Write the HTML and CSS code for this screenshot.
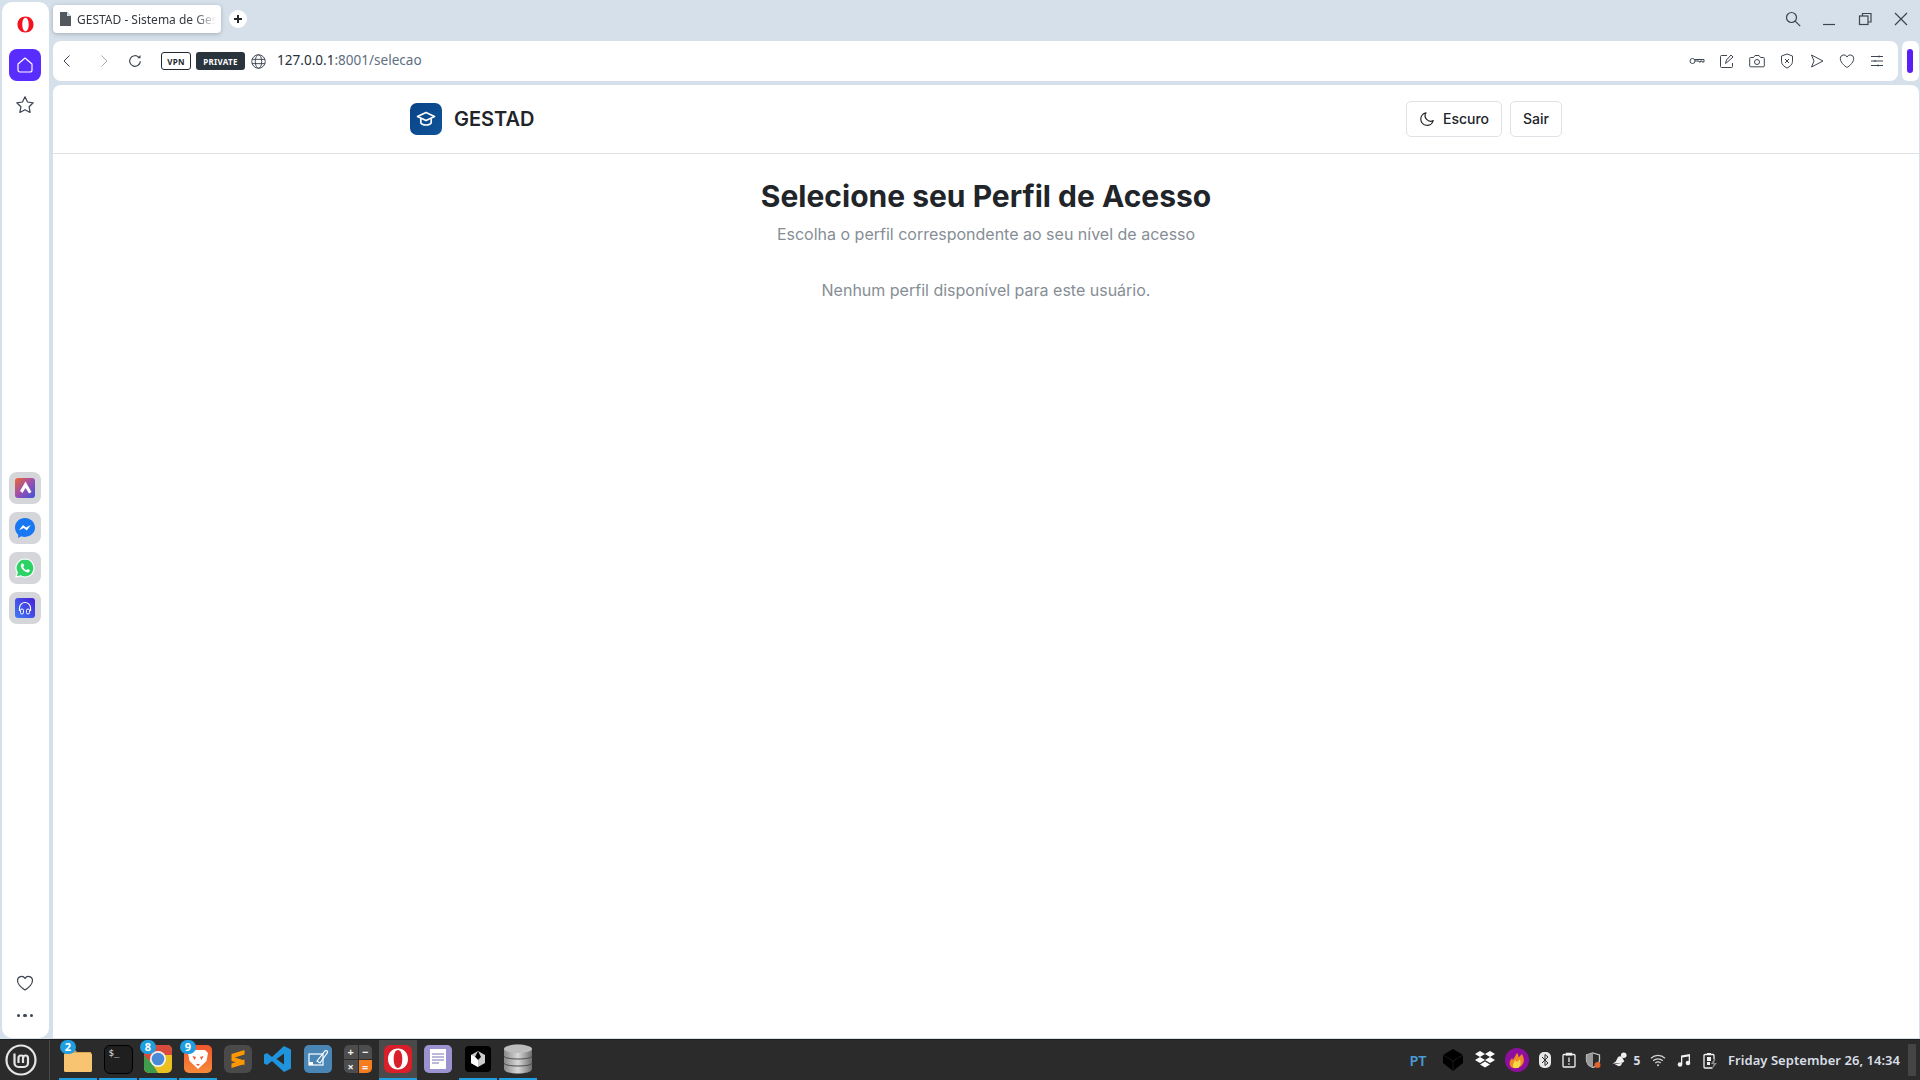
FILE: index.html
```html
<!DOCTYPE html>
<html lang="pt-BR">

<head>
    <meta charset="UTF-8">
    <meta name="viewport" content="width=device-width, initial-scale=1.0">
    <title>GESTAD - Sistema de Gestão</title>
    <link rel="stylesheet" href="styles.css">
</head>

<body>
    <div class="browser">
        <aside class="sidebar">
            <svg class="opera-mark" width="17" height="17" viewBox="0 0 17 17"><path fill-rule="evenodd" d="M8.500.5c4.700 0 8 3.500 8 8s-3.300 8-8 8-8-3.500-8-8 3.300-8 8-8zm0 1.200c-2 0-3.200 3-3.200 6.800s1.200 6.800 3.200 6.800 3.200-3 3.200-6.800-1.200-6.800-3.200-6.800z" fill="#f5121f"/></svg>
            <div class="side-btn side-btn-active">
                <svg width="18" height="18" viewBox="0 0 18 18" fill="none" stroke="#fff" stroke-width="1.200" stroke-linejoin="round"><path d="M2 8 9 2l7 6v6a2 2 0 0 1-2 2H4a2 2 0 0 1-2-2z"/></svg>
            </div>
            <div class="side-btn">
                <svg width="20" height="20" viewBox="0 0 18 18" fill="none" stroke="#3d4650" stroke-width="1.100" stroke-linejoin="round"><path d="M9 1.600l2.300 4.700 5.100.7-3.700 3.600.9 5.100L9 13.200l-4.600 2.500.9-5.100L1.600 7l5.100-.7z"/></svg>
            </div>
            <div class="side-apps">
                <div class="side-btn side-btn-app">
                    <svg width="20" height="20" viewBox="0 0 20 20"><defs><linearGradient id="aria" x1="0" y1="0" x2="1" y2="1"><stop offset="0" stop-color="#f0662c"/><stop offset=".5" stop-color="#9a4fb0"/><stop offset="1" stop-color="#3a55d8"/></linearGradient></defs><rect width="20" height="20" rx="3" fill="url(#aria)"/><path d="M10.500 3.500 5 13l2.500 2 3-5 3.500 5.500 2.500-1.500z" fill="#fff"/></svg>
                </div>
                <div class="side-btn side-btn-app">
                    <svg width="20" height="20" viewBox="0 0 20 20"><path d="M10 0C4.400 0 0 4.100 0 9.600c0 2.900 1.200 5.400 3.200 7.100V20l3-1.700c1.200.4 2.500.6 3.800.6 5.600 0 10-4.100 10-9.300S15.600 0 10 0z" fill="#1877f2"/><path d="M4 12.300 8 7l3 2.500L15.800 7l-4 5.400-3-2.500z" fill="#fff"/></svg>
                </div>
                <div class="side-btn side-btn-app">
                    <svg width="20" height="20" viewBox="0 0 20 20"><path d="M10 1a9 9 0 0 0-7.700 13.600L1 19l4.500-1.200A9 9 0 1 0 10 1z" fill="#2bd366" stroke="#fff" stroke-width="1.200"/><path d="M7 5.500c-.6.300-1.300 1.200-1.200 2.300.2 2.700 3.700 6.300 6.600 6.600 1.100.1 2-.6 2.300-1.300.2-.5.100-.9-.1-1l-2-1-.9 1.100c-1.500-.5-2.900-1.900-3.500-3.500l1-.9-.9-2.100c-.1-.2-.8-.4-1.300-.2z" fill="#fff"/></svg>
                </div>
                <div class="side-btn side-btn-app">
                    <svg width="20" height="20" viewBox="0 0 20 20"><defs><linearGradient id="player" x1="0" y1="1" x2="1" y2="0"><stop offset="0" stop-color="#3d7cf5"/><stop offset="1" stop-color="#4a1fd8"/></linearGradient></defs><rect width="20" height="20" rx="3" fill="url(#player)"/><path d="M4.500 13v-3a5.500 5.500 0 0 1 11 0v3" fill="none" stroke="#fff" stroke-width="1.200"/><rect x="5.500" y="11" width="3" height="5" rx="1.500" fill="none" stroke="#fff"/><rect x="11.500" y="11" width="3" height="5" rx="1.500" fill="none" stroke="#fff"/></svg>
                </div>
            </div>
            <div class="side-bottom">
                <svg width="18" height="18" viewBox="0 0 18 18" fill="none" stroke="#3d4650" stroke-width="1.200" stroke-linejoin="round"><path d="M9 16S1.500 11.500 1.500 6.300A4 4 0 0 1 9 4.500a4 4 0 0 1 7.500 1.800C16.500 11.500 9 16 9 16z"/></svg>
                <div class="side-dots"><i></i><i></i><i></i></div>
            </div>
        </aside>

        <div class="main">
            <div class="tabstrip">
                <div class="tab">
                    <svg width="13" height="14" viewBox="0 0 13 14"><path d="M1 0h7l4 4v10H1z" fill="#53585e"/><path d="M8 0v4h4" fill="#d6e0ea"/></svg>
                    <span class="tab-title">GESTAD - Sistema de Gestão</span>
                </div>
                <div class="tab-new">
                    <svg width="10" height="10" viewBox="0 0 10 10"><path d="M5 1v8M1 5h8" stroke="#23292f" stroke-width="2"/></svg>
                </div>
                <div class="window-controls">
                    <svg width="18" height="18" viewBox="0 0 18 18" fill="none" stroke="#3c444c" stroke-width="1.200"><circle cx="7.500" cy="7.500" r="5"/><path d="M11.200 11.200l5 5"/></svg>
                    <svg width="18" height="18" viewBox="0 0 18 18" fill="none" stroke="#3c444c" stroke-width="1.200"><path d="M3 14.500h12"/></svg>
                    <svg width="18" height="18" viewBox="0 0 18 18" fill="none" stroke="#3c444c" stroke-width="1.200"><rect x="3.500" y="6" width="8.500" height="8.500"/><path d="M6.500 6V3.500H15V12h-3"/></svg>
                    <svg width="18" height="18" viewBox="0 0 18 18" fill="none" stroke="#3c444c" stroke-width="1.200"><path d="M3 3l12 12M15 3 3 15"/></svg>
                </div>
            </div>

            <div class="address-row">
                <div class="address-bar">
                    <svg class="nav-back" width="12" height="14" viewBox="0 0 12 14" fill="none" stroke="#3d4650" stroke-width="1"><path d="M8.500 1.500 3 7l5.500 5.500"/></svg>
                    <svg class="nav-forward" width="12" height="14" viewBox="0 0 12 14" fill="none" stroke="#a5abb2" stroke-width="1"><path d="M3.500 1.500 9 7l-5.500 5.500"/></svg>
                    <svg class="nav-reload" width="14" height="14" viewBox="0 0 14 14" fill="none" stroke="#3d4650" stroke-width="1.200"><path d="M12.300 7.200a5.300 5.300 0 1 1-1.500-3.900"/><path d="M12.500 1v3.200H9.300" fill="#3d4650" stroke="none"/></svg>
                    <span class="badge-vpn">VPN</span>
                    <span class="badge-private">PRIVATE</span>
                    <svg class="globe" width="15" height="15" viewBox="0 0 14 14" fill="none" stroke="#3d4650" stroke-width=".9"><circle cx="7" cy="7" r="6.300"/><ellipse cx="7" cy="7" rx="3" ry="6.300"/><path d="M.9 5h12.200M.9 9h12.200"/></svg>
                    <span class="url"><span class="url-host">127.0.0.1</span>:8001/selecao</span>
                    <div class="address-tools">
                        <svg width="16" height="16" viewBox="0 0 16 16" fill="none" stroke="#3d4650" stroke-width="1"><circle cx="3.500" cy="8" r="2.500"/><path d="M6 6.500h9v2.500h-2v-1h-1.500v1H10v-1H6"/></svg>
                        <svg width="16" height="16" viewBox="0 0 16 16" fill="none" stroke="#3d4650" stroke-width="1"><path d="M8 2.500H2.500a1 1 0 0 0-1 1v10a1 1 0 0 0 1 1h10a1 1 0 0 0 1-1V10"/><path d="M6.500 10.500l1-3.500 4.500-5 2 2-5 4.500z"/></svg>
                        <svg width="16" height="16" viewBox="0 0 16 16" fill="none" stroke="#3d4650" stroke-width="1"><path d="M1.500 4.500h3L6 2.500h4l1.500 2h3a.8.8 0 0 1 .8.800V13a.8.8 0 0 1-.8.800h-13A.8.800 0 0 1 .7 13V5.300a.8.800 0 0 1 .8-.800z"/><circle cx="8" cy="9" r="2.500"/></svg>
                        <svg width="16" height="16" viewBox="0 0 16 16" fill="none" stroke="#3d4650" stroke-width="1"><path d="M8 1l5.500 2v5.500c0 3-3 5.500-5.500 6.500-2.500-1-5.500-3.500-5.500-6.500V3z"/><path d="M6 6l4 4M10 6l-4 4"/></svg>
                        <svg width="16" height="16" viewBox="0 0 16 16" fill="none" stroke="#3d4650" stroke-width="1" stroke-linejoin="round"><path d="M2.500 2l11.500 6-11.500 6L5 8z"/></svg>
                        <svg width="16" height="16" viewBox="0 0 16 16" fill="none" stroke="#3d4650" stroke-width="1" stroke-linejoin="round"><path d="M8 14.500S1.300 10.500 1.300 5.500A3.500 3.500 0 0 1 8 4a3.500 3.500 0 0 1 6.700 1.500C14.700 10.500 8 14.500 8 14.500z"/></svg>
                        <svg width="16" height="16" viewBox="0 0 16 16" fill="none" stroke="#3d4650" stroke-width="1"><path d="M2 3.500h12M2 8h12M2 12.500h12M10 2.500v2M6 7v2M9 11.500v2"/></svg>
                    </div>
                </div>
                <div class="side-panel-toggle"><span></span></div>
            </div>

            <div class="page">
                <header class="topbar">
                    <div class="topbar-inner">
                        <div class="brand">
                            <div class="brand-logo">
                                <svg width="20" height="20" viewBox="0 0 20 20" fill="none" stroke="#fff" stroke-width="1.700" stroke-linejoin="round"><path d="M10 3.500 1.500 7.500 10 11.500l8.500-4z"/><path d="M4.800 9.500v4c0 1.300 2.400 2.500 5.200 2.500s5.200-1.200 5.200-2.500v-4"/></svg>
                            </div>
                            <span class="brand-name">GESTAD</span>
                        </div>
                        <div class="topbar-actions">
                            <button class="btn" type="button">
                                <svg width="16" height="16" viewBox="0 0 16 16" fill="none" stroke="#212529" stroke-width="1.200" stroke-linejoin="round"><path d="M7 1.800a6.300 6.300 0 1 0 7.200 7.800A5.500 5.500 0 0 1 7 1.800z"/></svg>
                                Escuro
                            </button>
                            <button class="btn" type="button">Sair</button>
                        </div>
                    </div>
                </header>
                <main class="content">
                    <h1>Selecione seu Perfil de Acesso</h1>
                    <p class="subtitle">Escolha o perfil correspondente ao seu nível de acesso</p>
                    <p class="empty">Nenhum perfil disponível para este usuário.</p>
                </main>
            </div>
        </div>
    </div>

    <footer class="taskbar">
        <div class="mint-logo">
            <svg width="32" height="32" viewBox="0 0 32 32" fill="none" stroke="#e6e6e6"><circle cx="16" cy="16" r="14.500" stroke-width="2.200"/><path d="M9.500 9.500V19a4 4 0 0 0 4 4h5.500a4 4 0 0 0 4-4v-5a2.500 2.500 0 0 0-5 0v5M13.500 19v-5a2.500 2.500 0 0 1 5 0" stroke-width="2.200"/></svg>
        </div>
        <div class="launcher">
            <div class="slot slot-open">
                <span class="count">2</span>
                <svg width="28" height="26" viewBox="0 0 28 26"><path d="M1 4h10l2 2h14v3H1z" fill="#d9a654"/><rect x="0" y="7" width="28" height="19" rx="1.500" fill="#f8c471"/></svg>
            </div>
            <div class="slot slot-open">
                <div class="term-icon">$_</div>
            </div>
            <div class="slot slot-open">
                <span class="count">8</span>
                <svg width="28" height="28" viewBox="0 0 28 28"><rect width="28" height="28" rx="5" fill="#eac120"/><path d="M0 5a5 5 0 0 1 5-5h18a5 5 0 0 1 5 5v5H14L5 16 0 11z" fill="#d94c3d"/><path d="M0 10l9 10 5 8H5a5 5 0 0 1-5-5z" fill="#3f9e4d"/><circle cx="14" cy="14" r="8" fill="#f2f2f2"/><circle cx="14" cy="14" r="6.300" fill="#4a8ad6"/></svg>
            </div>
            <div class="slot slot-open">
                <span class="count">9</span>
                <svg width="28" height="28" viewBox="0 0 28 28"><defs><linearGradient id="brave" x1="0" y1="0" x2="0" y2="1"><stop offset="0" stop-color="#f2552c"/><stop offset="1" stop-color="#f68a3a"/></linearGradient></defs><rect width="28" height="28" rx="5" fill="url(#brave)"/><path d="M7 5h14l3 3-1.500 8L14 24l-8.500-8L4 8z" fill="#fff"/><path d="M8.500 11l3.500 1-1.500 3zM19.500 11l-3.500 1 1.500 3zM12 19h4l-2 2z" fill="#f2552c"/></svg>
            </div>
            <div class="slot">
                <svg width="28" height="28" viewBox="0 0 28 28"><rect width="28" height="28" rx="6" fill="#4a4a4a"/><path d="M20.500 5v4.500L7.500 13.500V9zM7.500 11.500l13 4v4.500l-13-4zM20.500 14.500v4.500l-13 4v-4.500z" fill="#ff9800"/></svg>
            </div>
            <div class="slot">
                <svg width="28" height="28" viewBox="0 0 28 28"><path d="M20 1l7 3.500v19L20 27 8 16l-5 4-3-1.500V9.500L3 8l5 4zM20 8.500 12.500 14l7.500 5.500z" fill="#1f94dc"/></svg>
            </div>
            <div class="slot">
                <svg width="28" height="28" viewBox="0 0 28 28"><rect width="28" height="28" rx="5" fill="#4a86b5"/><rect x="5" y="9" width="14" height="11" fill="none" stroke="#fff" stroke-width="1.200"/><rect x="5" y="17" width="4" height="3" fill="#fff"/><path d="M13 16l8-10c1-1 3 0 2.500 1.500L16 18z" fill="none" stroke="#fff" stroke-width="1.200"/></svg>
            </div>
            <div class="slot">
                <div class="calc-icon"><span>+</span><span>−</span><span>×</span><span class="calc-eq">=</span></div>
            </div>
            <div class="slot slot-open slot-active">
                <svg width="28" height="28" viewBox="0 0 28 28"><rect width="28" height="28" rx="6" fill="#d81f2a"/><path fill-rule="evenodd" d="M14 3.500c6 0 10 4.500 10 10.500s-4 10.500-10 10.500S4 20 4 14 8 3.500 14 3.500zm0 1.500c-2.800 0-4.300 4-4.300 9s1.500 9 4.300 9 4.300-4 4.300-9-1.500-9-4.300-9z" fill="#fff"/></svg>
            </div>
            <div class="slot">
                <svg width="28" height="28" viewBox="0 0 28 28"><rect width="28" height="28" rx="5" fill="#9b93d0"/><rect x="6" y="4" width="16" height="20" fill="#fff"/><path d="M8 9h12M8 12h12M8 15h12M8 18h7" stroke="#7a72b5"/></svg>
            </div>
            <div class="slot slot-open">
                <svg width="26" height="26" viewBox="0 0 26 26"><rect width="26" height="26" rx="4" fill="#000"/><path d="M13 5l7 4v8l-7 4-7-4V9z" fill="#c9c9c9"/><path d="M13 5l3 6-3 3-3-3z" fill="#000"/><path d="M13 14v7l-7-4V9l4 2z" fill="#fff"/></svg>
            </div>
            <div class="slot slot-open">
                <svg width="30" height="30" viewBox="0 0 30 30"><defs><linearGradient id="db" x1="0" y1="0" x2="1" y2="0"><stop offset="0" stop-color="#8a8a8a"/><stop offset=".5" stop-color="#d8d8d8"/><stop offset="1" stop-color="#6e6e6e"/></linearGradient></defs><path d="M1 5c0-6 28-6 28 0v20c0 6-28 6-28 0z" fill="url(#db)"/><path d="M1 12c0 4 28 4 28 0M1 19c0 4 28 4 28 0" fill="none" stroke="#4a4a4a"/><ellipse cx="15" cy="5" rx="14" ry="4" fill="#bdbdbd"/></svg>
            </div>
        </div>
        <div class="tray">
            <span class="tray-lang">PT</span>
            <svg width="24" height="24" viewBox="0 0 24 24"><path d="M12 1l10 6v8l-10 8L2 15V7z" fill="#000"/><path d="M12 13l10-6M12 13 2 7M12 13v10" stroke="#1a1a1a"/></svg>
            <svg width="22" height="20" viewBox="0 0 22 20" fill="#fff"><path d="M6 1l5 3-5 3-5-3zM16 1l5 3-5 3-5-3zM6 7l5 3-5 3-5-3zM16 7l5 3-5 3-5-3zM6 14.500l5-3 5 3-5 3z"/></svg>
            <svg width="24" height="24" viewBox="0 0 24 24"><circle cx="12" cy="12" r="12" fill="#8e0f9e"/><path d="M8 20c-3-1-4-4-3-7l2-3 1 2 4-7c2 2 1 4 2 4l3-3c2 4 3 8 0 11-1 2-6 4-9 3z" fill="#f08a24"/><path d="M9 20c-2-2-1-4 1-8l2 2 3-3c1 4 1 7-2 9z" fill="#f6d84b"/></svg>
            <svg width="12" height="16" viewBox="0 0 12 16"><rect width="12" height="16" rx="5" fill="#e8e8e8"/><path d="M3 5l6 6-3 2.500V2.500L9 5l-6 6" fill="none" stroke="#2b2b2b"/></svg>
            <svg width="14" height="16" viewBox="0 0 14 16" fill="none" stroke="#f0f0f0" stroke-width="1.300"><rect x="1" y="2.500" width="12" height="12.500" rx="1"/><path d="M4.500 3.500v-2h5v2" fill="#f0f0f0"/><path d="M7 5.500V10M7 11.300v1.500"/></svg>
            <svg width="16" height="16" viewBox="0 0 16 16"><path d="M8 1l6.500 2v5c0 3.500-3 6-6.500 7.500C4.500 14 1.500 11.500 1.500 8V3z" fill="none" stroke="#c8c8c8" stroke-width="1.300"/><path d="M8 1v14.500C4.500 14 1.500 11.500 1.500 8V3z" fill="#9a9a9a"/><circle cx="12.500" cy="13" r="3" fill="#e0642c"/></svg>
            <svg width="17" height="16" viewBox="0 0 15 15" fill="#f0f0f0"><path d="M1 11l3-2 2-4c1-1.500 3-1.500 4 0l2 4-2 1z"/><path d="M3 11.500l7-1.500-1 2.500c-1 1-3 1-4 0z"/><circle cx="11.500" cy="3" r="2.600"/></svg>
            <span class="tray-num">5</span>
            <svg width="16" height="13" viewBox="0 0 16 13" fill="none" stroke="#d4d4d4" stroke-width="1.200"><path d="M1 4.200a10 10 0 0 1 14 0M3.200 6.700a7 7 0 0 1 9.600 0M5.300 9a4 4 0 0 1 5.400 0"/><circle cx="8" cy="11.300" r="1" fill="#d4d4d4" stroke="none"/></svg>
            <svg width="14" height="14" viewBox="0 0 14 14" fill="#f0f0f0"><path d="M4 2.500 13 1v2.200L5.300 4.500V11H4zM11.700 3.200H13V10h-1.300z"/><circle cx="3" cy="11.500" r="2.300"/><circle cx="11" cy="10" r="2.300"/></svg>
            <svg width="14" height="17" viewBox="0 0 14 17"><path d="M9.500 16H2a1 1 0 0 1-1-1V3.500a1 1 0 0 1 1-1h8a1 1 0 0 1 1 1V7" fill="none" stroke="#f0f0f0" stroke-width="1.300"/><rect x="4" y="1" width="4" height="2" fill="#f0f0f0"/><path d="M4 5h4v4H4zM4 10h3v3H4z" fill="#f0f0f0"/><path d="M11 7 8 12h2.500L9 17l5-6h-3l1.500-4z" fill="#8a8a8a"/></svg>
            <span class="tray-clock">Friday September 26, 14:34</span>
            <span></span>
            <span class="show-desktop"></span>
        </div>
    </footer>
</body>

</html>
```

FILE: styles.css
```css
* {
    box-sizing: border-box;
}

html,
body {
    height: 100%;
}

body {
    margin: 0;
    height: 1080px;
    overflow: hidden;
    display: flex;
    flex-direction: column;
    background-color: #d6e0ea;
    font-family: "Noto Sans", sans-serif;
}

.browser {
    flex: 1;
    min-height: 0;
    display: flex;
    padding: 2px 1px 1px 2px;
}

/* left rail */
.sidebar {
    width: 47px;
    margin-right: 4px;
    background-color: #fff;
    border-radius: 10px;
    display: flex;
    flex-direction: column;
    align-items: center;
    padding: 14px 1px 0 0;
}

.opera-mark {
    margin-bottom: 16px;
}

.side-btn {
    width: 32px;
    height: 32px;
    border-radius: 8px;
    display: flex;
    align-items: center;
    justify-content: center;
}

.side-btn-active {
    background-color: #5a2dff;
    margin-bottom: 8px;
}

.side-apps {
    margin-top: 351px;
    display: flex;
    flex-direction: column;
    gap: 8px;
}

.side-btn-app {
    background-color: #d4d6da;
}

.side-bottom {
    margin-top: auto;
    padding-bottom: 21px;
    display: flex;
    flex-direction: column;
    align-items: center;
    gap: 22px;
}

.side-dots {
    display: flex;
    gap: 3px;
}

.side-dots i {
    width: 3.500px;
    height: 3.500px;
    border-radius: 50%;
    background-color: #3d4650;
}

.main {
    flex: 1;
    min-width: 0;
    display: flex;
    flex-direction: column;
}

/* tabs and window buttons */
.tabstrip {
    height: 39px;
    display: flex;
    align-items: flex-start;
    padding-top: 3px;
}

.tab {
    width: 168px;
    height: 28px;
    background-color: #fff;
    border-radius: 4px;
    box-shadow: 0 1px 4px rgba(40, 60, 80, 0.3);
    display: flex;
    align-items: center;
    gap: 5px;
    padding: 0 5px 0 6px;
}

.tab-title {
    flex: 1;
    overflow: hidden;
    white-space: nowrap;
    font-size: 12px;
    color: #33393f;
    -webkit-mask-image: linear-gradient(to right, #000 85%, transparent);
    mask-image: linear-gradient(to right, #000 85%, transparent);
}

.tab-new {
    width: 18px;
    height: 18px;
    margin: 5px 0 0 8px;
    border-radius: 50%;
    background-color: #fff;
    display: flex;
    align-items: center;
    justify-content: center;
}

.window-controls {
    margin-left: auto;
    padding: 5px 9px 0 0;
    display: flex;
    gap: 18px;
}

/* address bar */
.address-row {
    height: 40px;
    display: flex;
    gap: 4px;
    margin-bottom: 4px;
}

.address-bar {
    flex: 1;
    background-color: #fff;
    border-radius: 8px;
    display: flex;
    align-items: center;
    padding-left: 8px;
}

.nav-forward {
    margin-left: 25px;
}

.nav-reload {
    margin-left: 18px;
}

.badge-vpn,
.badge-private {
    height: 18px;
    border-radius: 3px;
    font-size: 8px;
    font-weight: 700;
    display: flex;
    align-items: center;
    justify-content: center;
    letter-spacing: 0.3px;
}

.badge-vpn {
    width: 30px;
    margin-left: 19px;
    border: 1px solid #22292f;
    color: #22292f;
}

.badge-private {
    width: 49px;
    margin-left: 5px;
    background-color: #2a343d;
    color: #fff;
}

.globe {
    margin-left: 6px;
}

.url {
    margin: 0 0 2px 11px;
    font-size: 13.550px;
    color: #5d6f80;
}

.url-host {
    color: #2a3138;
}

.address-tools {
    margin-left: auto;
    padding-right: 13px;
    display: flex;
    gap: 14px;
}

.side-panel-toggle {
    width: 17px;
    padding-right: 1px;
    background-color: #fff;
    border-radius: 6px;
    display: flex;
    align-items: center;
    justify-content: center;
}

.side-panel-toggle span {
    width: 6px;
    height: 24px;
    border-radius: 3px;
    background-color: #5a1ff5;
}

/* the page itself */
.page {
    flex: 1;
    background-color: #fff;
    border-radius: 8px 8px 0 0;
    font-family: Inter, sans-serif;
    color: #212529;
}

.topbar {
    height: 69px;
    border-bottom: 1px solid #dee2e6;
    display: flex;
    justify-content: center;
}

.topbar-inner {
    width: 1152px;
    display: flex;
    align-items: center;
    justify-content: space-between;
}

.brand {
    display: flex;
    align-items: center;
    gap: 12px;
}

.brand-logo {
    width: 32px;
    height: 32px;
    border-radius: 7px;
    background: linear-gradient(135deg, #0a4287, #0f5499);
    display: flex;
    align-items: center;
    justify-content: center;
}

.brand-name {
    font-size: 20px;
    font-weight: 600;
}

.topbar-actions {
    display: flex;
    gap: 8px;
}

.btn {
    height: 36px;
    padding: 0 12px 1px;
    background-color: #fff;
    border: 1px solid #dee2e6;
    border-radius: 5px;
    font-family: Inter, sans-serif;
    font-size: 14px;
    font-weight: 500;
    color: #212529;
    display: flex;
    align-items: center;
    gap: 8px;
}

.content {
    padding-top: 24px;
    text-align: center;
}

h1 {
    margin: 0;
    font-size: 30px;
    line-height: 36px;
    font-weight: 700;
}

.subtitle {
    margin: 10px 0 0;
    font-size: 16px;
    line-height: 20px;
    color: #868e96;
}

.empty {
    margin: 36px 0 0;
    font-size: 16px;
    line-height: 20px;
    color: #868e96;
}

/* desktop panel */
.taskbar {
    height: 41px;
    background-color: #2b2b2b;
    border-top: 1px solid #1e1e1e;
    display: flex;
    align-items: stretch;
}

.mint-logo {
    width: 50px;
    display: flex;
    align-items: center;
    justify-content: center;
    padding-right: 8px;
    margin-right: 9px;
    border-right: 1px solid #4a4a4a;
}

.launcher {
    display: flex;
    gap: 2px;
}

.slot {
    width: 38px;
    position: relative;
    display: flex;
    align-items: center;
    justify-content: center;
    padding-bottom: 2px;
}

.slot-open::after {
    content: "";
    position: absolute;
    left: 0;
    right: 0;
    bottom: 0;
    height: 2px;
    background-color: #1f9ee0;
}

.slot-active {
    background-color: #4a4a4a;
}

.count {
    position: absolute;
    left: 1px;
    top: 0;
    width: 16px;
    height: 14px;
    border-radius: 7px;
    background-color: #1f9ee0;
    color: #fff;
    font-size: 11px;
    font-weight: 700;
    line-height: 14px;
    text-align: center;
    z-index: 1;
}

.term-icon {
    width: 29px;
    height: 29px;
    border-radius: 6px;
    background-color: #1f1f1f;
    border: 1px solid #000;
    color: #e8e8e8;
    font-family: "DejaVu Sans Mono", monospace;
    font-size: 9px;
    padding: 2px 0 0 4px;
}

.calc-icon {
    width: 28px;
    height: 28px;
    display: grid;
    grid-template-columns: 1fr 1fr;
    grid-template-rows: 13.500px 13.500px;
    gap: 1px;
}

.calc-icon span {
    background-color: #4d4d4d;
    color: #f0f0f0;
    font-size: 11px;
    line-height: 13px;
    font-weight: 700;
    display: flex;
    align-items: center;
    justify-content: center;
}

.calc-icon span:nth-child(1) {
    border-top-left-radius: 5px;
}

.calc-icon span:nth-child(2) {
    border-top-right-radius: 5px;
}

.calc-icon span:nth-child(3) {
    border-bottom-left-radius: 5px;
}

.calc-icon .calc-eq {
    background-color: #f57c1f;
    border-bottom-right-radius: 5px;
}

.tray {
    margin-left: auto;
    padding-right: 4px;
    display: grid;
    grid-template-columns: 36px 34px 30px 34px 22px 26px 22px 30px 6px 36px 16px 36px 172px 8px 8px;
    align-items: center;
    justify-items: center;
}

.tray-lang {
    font-size: 14.500px;
    font-weight: 600;
    color: #4a9ad4;
}

.tray-num {
    font-size: 12px;
    font-weight: 700;
    color: #d8dfe6;
}

.tray-clock {
    justify-self: start;
    white-space: nowrap;
    font-size: 13px;
    letter-spacing: 0.050px;
    font-weight: 600;
    color: #d8dfe6;
}

.show-desktop {
    width: 8px;
    height: 32px;
    background-color: #454545;
}
```
